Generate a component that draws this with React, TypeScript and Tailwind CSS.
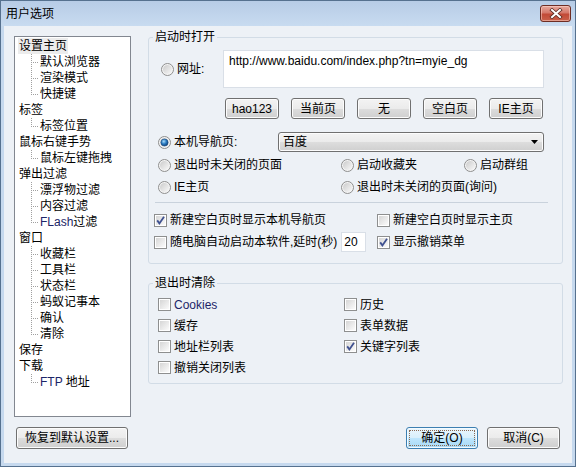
import { useId, type ReactNode } from "react";

function cleanId(id: string) {
  return id.replace(/[^a-zA-Z0-9]/g, "");
}

function Radio({ checked = false }: { checked?: boolean }) {
  const id = cleanId(useId());
  return (
    <svg width="13" height="13" viewBox="0 0 13 13" className="shrink-0">
      <defs>
        <linearGradient id={`${id}o`} x1="0" y1="0" x2="1" y2="1">
          <stop offset="0" stopColor="#cbcbcb" />
          <stop offset="1" stopColor="#f8f8f8" />
        </linearGradient>
        <radialGradient id={`${id}d`} cx="0.4" cy="0.35" r="0.7">
          <stop offset="0" stopColor="#a9dcfa" />
          <stop offset="0.5" stopColor="#2b7cc2" />
          <stop offset="1" stopColor="#0e3d74" />
        </radialGradient>
      </defs>
      <circle cx="6.5" cy="6.5" r="6" fill="#f4f4f4" stroke="#8e8e8e" />
      <circle cx="6.5" cy="6.5" r="4.5" fill={`url(#${id}o)`} />
      {checked && (
        <circle cx="6.5" cy="6.5" r="3.6" fill={`url(#${id}d)`} stroke="#17467c" strokeWidth="0.6" />
      )}
    </svg>
  );
}

function Check({ checked = false }: { checked?: boolean }) {
  const id = cleanId(useId());
  return (
    <svg width="13" height="13" viewBox="0 0 13 13" className="shrink-0">
      <defs>
        <linearGradient id={`${id}g`} x1="0" y1="0" x2="1" y2="1">
          <stop offset="0" stopColor="#d6d6d6" />
          <stop offset="1" stopColor="#fbfbfb" />
        </linearGradient>
      </defs>
      <rect x="0.5" y="0.5" width="12" height="12" fill="#fff" stroke="#8e8f8f" />
      <rect x="2" y="2" width="9" height="9" fill={`url(#${id}g)`} />
      {checked && (
        <path d="M3.2 6.4 L5.4 9.4 L10 2.8" fill="none" stroke="#3f5190" strokeWidth="1.8" />
      )}
    </svg>
  );
}

function Btn({ children, className = "" }: { children: ReactNode; className?: string }) {
  return (
    <button
      type="button"
      className={`flex items-center justify-center rounded-[3px] border border-[#707070] bg-[linear-gradient(to_bottom,#f3f3f3_0%,#ebebeb_50%,#dddddd_50%,#cfcfcf_100%)] text-[12px] leading-[16px] text-black shadow-[inset_0_0_0_1px_#fcfcfc] ${className}`}
    >
      {children}
    </button>
  );
}

function TreeLine({ last }: { last: boolean }) {
  return (
    <svg width="21" height="16" viewBox="0 0 21 16" className="shrink-0" shapeRendering="crispEdges">
      <line x1="12.5" y1="0" x2="12.5" y2={last ? 9 : 16} stroke="#a0a0a0" strokeDasharray="1 1" />
      <line x1="14" y1="8.5" x2="19" y2="8.5" stroke="#a0a0a0" strokeDasharray="1 1" />
    </svg>
  );
}

const latin = "text-[#1c2568]";

const tree: { label: ReactNode; children?: ReactNode[] }[] = [
  { label: "设置主页", children: ["默认浏览器", "渲染模式", "快捷键"] },
  { label: "标签", children: ["标签位置"] },
  { label: "鼠标右键手势", children: ["鼠标左键拖拽"] },
  {
    label: "弹出过滤",
    children: [
      "漂浮物过滤",
      "内容过滤",
      <>
        <span className={latin}>FLash</span>过滤
      </>,
    ],
  },
  { label: "窗口", children: ["收藏栏", "工具栏", "状态栏", "蚂蚁记事本", "确认", "清除"] },
  { label: "保存" },
  {
    label: "下载",
    children: [
      <>
        <span className={latin}>FTP</span> 地址
      </>,
    ],
  },
];

function Tree() {
  return (
    <div className="h-[381px] w-[117px] border border-[#828790] bg-white pl-[4px] pt-[1px] text-[12px] leading-[16px] text-black">
      {tree.map((node, n) => (
        <div key={n}>
          <div className="flex h-[16px] items-center">
            <span className={n === 0 ? "-ml-[1px] bg-[#ececec] px-[1px]" : ""}>{node.label}</span>
          </div>
          {node.children?.map((c, i) => (
            <div key={i} className="flex h-[16px] items-center">
              <TreeLine last={i === node.children!.length - 1} />
              <span>{c}</span>
            </div>
          ))}
        </div>
      ))}
    </div>
  );
}

function RadioItem({ label, checked, className = "" }: { label: ReactNode; checked?: boolean; className?: string }) {
  return (
    <div className={`flex items-center gap-[3px] ${className}`}>
      <Radio checked={checked} />
      <span>{label}</span>
    </div>
  );
}

function CheckItem({ label, checked, className = "" }: { label: ReactNode; checked?: boolean; className?: string }) {
  return (
    <div className={`flex items-center gap-[3px] ${className}`}>
      <Check checked={checked} />
      <span>{label}</span>
    </div>
  );
}

export default function App() {
  return (
    <div className="flex h-[467px] w-[576px] flex-col border border-[#56718f] bg-[#c6d9ee] font-['Liberation_Sans','Noto_Sans_CJK_SC',sans-serif] text-[12px] leading-[16px] text-black">
      {/* 标题栏 */}
      <div className="flex h-[25px] shrink-0 items-center justify-between bg-[linear-gradient(to_bottom,#b7cce6,#c8dbf0)] pl-[5px] pr-[4px]">
        <span className="text-[12px]">用户选项</span>
        <div className="flex h-[17px] w-[31px] items-center justify-center rounded-[3px] border border-[#6e2d24] bg-[linear-gradient(to_bottom,#e7a99d_0%,#d5786a_45%,#c24a37_55%,#c9604a_100%)] shadow-[inset_0_0_0_1px_rgba(255,220,210,0.5)]">
          <svg width="14" height="11" viewBox="0 0 14 11">
            <path d="M3 2 L11 9 M11 2 L3 9" stroke="#5a2a22" strokeWidth="3.6" strokeLinecap="square" />
            <path d="M3 2 L11 9 M11 2 L3 9" stroke="#ffffff" strokeWidth="2" strokeLinecap="square" />
          </svg>
        </div>
      </div>

      {/* 客户区 */}
      <div className="mx-[3px] mb-[3px] flex flex-1 flex-col bg-[#edf1f6]">
        <div className="flex h-[391px] items-start">
          <div className="ml-[10px] mt-[10px]">
            <Tree />
          </div>

          <div className="ml-[17px] mt-[3px] flex flex-col">
            {/* 启动时打开 */}
            <fieldset className="w-[415px] rounded-[3px] border border-[#d2dce6] pb-[10px]">
              <legend className="ml-[4px] px-[2px] leading-[16px]">启动时打开</legend>

              <div className="mt-[5px] flex items-center pl-[12px]">
                <RadioItem label="网址:" className="w-[62px]" />
                <div className="h-[38px] w-[321px] border border-[#d9dfe7] bg-white px-[5px] pt-[2px] text-[12px] leading-[16px]">
                  http://www.baidu.com/index.php?tn=myie_dg
                </div>
              </div>

              <div className="mt-[10px] flex gap-[12px] pl-[76px]">
                <Btn className="h-[21px] w-[54px]">hao123</Btn>
                <Btn className="h-[21px] w-[54px]">当前页</Btn>
                <Btn className="h-[21px] w-[54px]">无</Btn>
                <Btn className="h-[21px] w-[54px]">空白页</Btn>
                <Btn className="h-[21px] w-[54px]">IE主页</Btn>
              </div>

              <div className="mt-[13px] flex items-center pl-[9px]">
                <RadioItem label="本机导航页:" checked className="w-[120px]" />
                <div className="flex h-[20px] w-[266px] items-center justify-between rounded-[3px] border border-[#707070] bg-[linear-gradient(to_bottom,#f3f3f3_0%,#ebebeb_50%,#dddddd_50%,#cfcfcf_100%)] pl-[4px] pr-[5px] shadow-[inset_0_0_0_1px_#fcfcfc]">
                  <span>百度</span>
                  <svg width="7" height="4" viewBox="0 0 7 4">
                    <path d="M0 0 H7 L3.5 4 Z" fill="#000" />
                  </svg>
                </div>
              </div>

              <div className="mt-[2px] grid grid-cols-[183px_123px_1fr] pl-[9px]">
                <RadioItem label="退出时未关闭的页面" className="h-[22px]" />
                <RadioItem label="启动收藏夹" className="h-[22px]" />
                <RadioItem label="启动群组" className="h-[22px]" />
                <RadioItem label="IE主页" className="h-[22px]" />
                <RadioItem label="退出时未关闭的页面(询问)" className="col-span-2 h-[22px]" />
              </div>

              <div className="ml-[6px] mt-[4px] h-px w-[393px] bg-[#c9d2dc]" />

              <div className="mt-[6px] grid grid-cols-[223px_1fr] pl-[5px]">
                <CheckItem label="新建空白页时显示本机导航页" checked className="h-[22px]" />
                <CheckItem label="新建空白页时显示主页" className="h-[22px]" />
                <div className="flex h-[22px] items-center gap-[3px]">
                  <Check />
                  <span>随电脑自动启动本软件,延时(秒)</span>
                  <div className="ml-[1px] flex h-[20px] w-[25px] items-center border border-[#d9dfe7] bg-white pl-[2px]">
                    20
                  </div>
                </div>
                <CheckItem label="显示撤销菜单" checked className="h-[22px]" />
              </div>
            </fieldset>

            {/* 退出时清除 */}
            <fieldset className="mt-[11px] w-[415px] rounded-[3px] border border-[#d2dce6] pb-[5px]">
              <legend className="ml-[4px] px-[2px] leading-[16px]">退出时清除</legend>
              <div className="mt-[3px] grid grid-cols-[186px_1fr] pl-[9px]">
                <CheckItem label={<span className={latin}>Cookies</span>} className="h-[21px]" />
                <CheckItem label="历史" className="h-[21px]" />
                <CheckItem label="缓存" className="h-[21px]" />
                <CheckItem label="表单数据" className="h-[21px]" />
                <CheckItem label="地址栏列表" className="h-[21px]" />
                <CheckItem label="关键字列表" checked className="h-[21px]" />
                <CheckItem label="撤销关闭列表" className="h-[21px]" />
              </div>
            </fieldset>
          </div>
        </div>

        {/* 底部按钮 */}
        <div className="mt-[10px] flex items-center">
          <Btn className="ml-[12px] h-[22px] w-[112px]">恢复到默认设置...</Btn>
          <div className="ml-auto mr-[12px] flex gap-[9px]">
            <button
              type="button"
              className="flex h-[22px] w-[72px] rounded-[3px] border border-[#3c7fb1] bg-[linear-gradient(to_bottom,#eaf6fd_0%,#d9f0fc_50%,#bee6fd_50%,#a7d9f5_100%)] p-[2px] text-[12px] leading-[16px] shadow-[inset_0_0_0_1px_#f4fbff]"
            >
              <span className="flex flex-1 items-center justify-center border border-dotted border-[#8a6a55]">
                确定(O)
              </span>
            </button>
            <Btn className="h-[22px] w-[73px]">取消(C)</Btn>
          </div>
        </div>
      </div>
    </div>
  );
}
